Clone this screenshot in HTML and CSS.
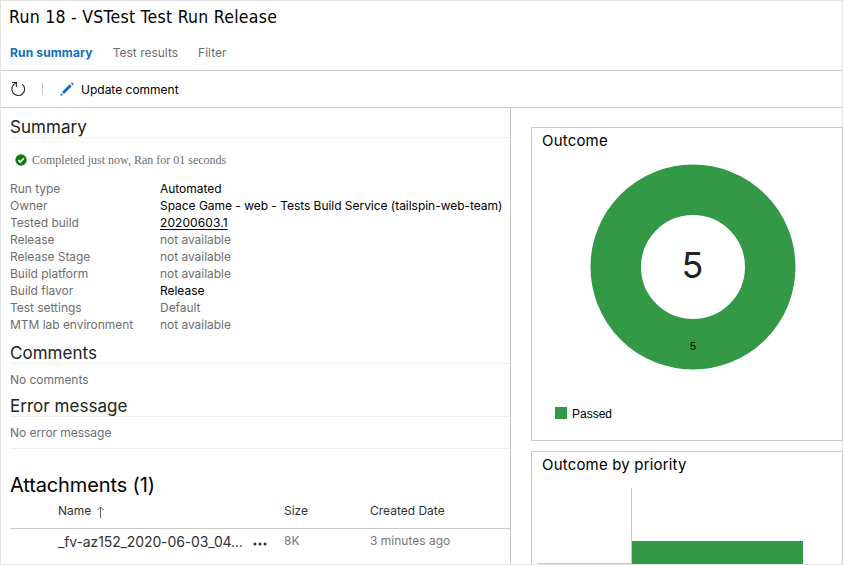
FILE: index.html
```html
<!DOCTYPE html>
<html lang="en">
<head>
<meta charset="utf-8">
<title>Run 18 - VSTest Test Run Release</title>
<link rel="stylesheet" href="styles.css">
</head>
<body>
<div class="app">
  <header class="header">
    <h1 class="title"><span>Run 18 - VSTest Test Run Release</span></h1>
    <nav class="tabs">
      <a class="tab active">Run summary</a>
      <a class="tab results">Test results</a>
      <a class="tab">Filter</a>
    </nav>
  </header>
  <div class="toolbar">
    <svg class="refresh" width="16" height="16" viewBox="0 0 16 16" fill="none" stroke="#222" stroke-width="1.1"><path d="M5.6 2.3A6.4 6.4 0 1 0 12.2 3.1M2 1.5H6.4V5.8"/></svg>
    <span class="divider"></span>
    <svg class="pencil" width="14" height="14" viewBox="0 0 14 14" fill="#106ebe"><path d="M.3 13.7 1 11 3 13ZM2 10 9.7 2.3 11.7 4.3 4 12ZM10.7 1.3 11.3.7Q11.9.1 12.5.7L13.3 1.5Q13.9 2.1 13.3 2.7L12.7 3.3Z"/></svg>
    <span class="update">Update comment</span>
  </div>
  <main class="content">
    <section class="details">
      <h2 class="heading first"><span class="h-summary">Summary</span></h2>
      <div class="status">
        <svg width="12" height="12" viewBox="0 0 12 12"><circle cx="6" cy="6" r="5.7" fill="#107c10"/><path d="M3.2 6.2 5.2 8.1 8.9 4.2" fill="none" stroke="#fff" stroke-width="1.6"/></svg>
        <span>Completed just now, Ran for 01 seconds</span>
      </div>
      <dl class="fields">
        <dt>Run type</dt><dd class="strong">Automated</dd>
        <dt>Owner</dt><dd class="strong owner">Space Game - web - Tests Build Service (tailspin-web-team)</dd>
        <dt>Tested build</dt><dd class="strong"><a class="link">20200603.1</a></dd>
        <dt>Release</dt><dd>not available</dd>
        <dt>Release Stage</dt><dd>not available</dd>
        <dt>Build platform</dt><dd>not available</dd>
        <dt>Build flavor</dt><dd class="strong">Release</dd>
        <dt>Test settings</dt><dd>Default</dd>
        <dt>MTM lab environment</dt><dd>not available</dd>
      </dl>
      <h2 class="heading comments"><span>Comments</span></h2>
      <p class="note">No comments</p>
      <h2 class="heading error"><span>Error message</span></h2>
      <p class="note last">No error message</p>
      <h2 class="attachments"><span>Attachments (1)</span></h2>
      <div class="grid-head">
        <span class="name">Name <svg class="arrow" width="7" height="12" viewBox="0 0 7 12" fill="none" stroke="#555" stroke-width=".9"><path d="M3.5 12V1M.5 4 3.5 1 6.5 4"/></svg></span><span>Size</span><span>Created Date</span>
      </div>
      <div class="grid-row">
        <span class="file"><span class="filename">_fv-az152_2020-06-03_04...</span><svg class="more" width="14" height="4" viewBox="0 0 14 4" fill="#333"><circle cx="2" cy="2" r="1.5"/><circle cx="7" cy="2" r="1.5"/><circle cx="12" cy="2" r="1.5"/></svg></span><span>8K</span><span>3 minutes ago</span>
      </div>
    </section>
    <aside class="charts">
      <section class="card outcome">
        <h3>Outcome</h3>
        <svg class="donut" width="206" height="206" viewBox="0 0 206 206">
          <circle cx="103" cy="103" r="77.25" fill="none" stroke="#339947" stroke-width="50.5"/>
          <text class="total" x="102.5" y="114" text-anchor="middle">5</text>
          <text class="slice" x="103" y="186" text-anchor="middle">5</text>
        </svg>
        <div class="legend"><i></i><span>Passed</span></div>
      </section>
      <section class="card priority">
        <h3>Outcome by priority</h3>
        <div class="plot"><div class="axis"></div><div class="bars"><div class="bar"></div></div></div>
      </section>
    </aside>
  </main>
</div>
</body>
</html>
```

FILE: styles.css
```css
* { box-sizing: border-box; }
body {
  margin: 0;
  overflow: hidden;
  background: #fff;
  color: #000;
  font: 12px/17px Inter, "Liberation Sans", sans-serif;
}
h1, h2, h3, p, dl, dd { margin: 0; font-weight: 400; }
.app {
  width: 843px;
  height: 565px;
  border: 1px solid #e1e1e1;
  display: flex;
  flex-direction: column;
}
.header { height: 70px; flex: none; border-bottom: 1px solid #c8c8c8; padding-left: 9px; }
.title {
  font: 17.5px/32px "DejaVu Sans Condensed", "DejaVu Sans", sans-serif;
  font-stretch: condensed;
  letter-spacing: .27px;
  margin-left: -1px;
  height: 32px;
  white-space: nowrap;
}
.tabs { display: flex; gap: 20px; padding-top: 11px; color: #6e6e6e; }
.active { color: #106ebe; font-weight: 700; letter-spacing: .15px; }
.toolbar {
  height: 37px;
  flex: none;
  border-bottom: 1px solid #c8c8c8;
  display: flex;
  align-items: center;
  padding-left: 9px;
}
.divider { width: 1px; height: 12px; background: #c8c8c8; margin: 0 17px 0 16px; }
.update { margin-left: 7px; }
.content { display: flex; flex: 1; min-height: 0; }
.details { width: 510px; flex: none; border-right: 1px solid #c8c8c8; padding-left: 9px; white-space: nowrap; overflow: hidden; }
.heading {
  font-size: 17px;
  line-height: 22px;
  letter-spacing: .04px;
  color: #222;
  border-bottom: 1px solid #efefef;
}
.first { height: 30px; padding-top: 8px; }
.status {
  height: 42px;
  display: flex;
  align-items: center;
  gap: 5px;
  padding: 1px 0 0 5px;
  color: #6e6e6e;
  font: 12px/16px "Liberation Serif", serif;
}
.fields { display: grid; grid-template-columns: 150px 1fr; grid-auto-rows: 17px; color: #6e6e6e; letter-spacing: -.035px; }
.strong { color: #000; }
.link { text-decoration: underline; text-underline-offset: 2px; letter-spacing: .08px; }
.comments { height: 31px; padding-top: 9px; }
.note { height: 31px; padding-top: 7px; color: #6e6e6e; letter-spacing: -.04px; }
.error { height: 22px; }
.last { height: 32px; border-bottom: 1px solid #efefef; }
.attachments { font-size: 20px; line-height: 26px; letter-spacing: -.13px; margin-top: 23px; }
.grid-head, .grid-row { display: grid; grid-template-columns: 226px 86px 1fr; padding-left: 48px; }
.grid-head { height: 31px; padding-top: 4px; border-bottom: 1px solid #c8c8c8; color: #333; }
.arrow { vertical-align: -3px; margin-left: 2px; }
.grid-row { padding-top: 3px; color: #777; }
.file { display: flex; align-items: center; gap: 10px; font-size: 14px; line-height: 20px; letter-spacing: -.12px; color: #333; }
.more { margin-top: 3px; }
.charts { flex: 1; margin-right: -1px; padding: 19px 0 0 20px; min-width: 0; overflow: hidden; }
.card { width: 312px; border: 1px solid #c8c8c8; }
.card h3 { font-size: 15px; line-height: 20px; letter-spacing: .18px; margin: 3px 0 0 10px; }
.outcome { height: 314px; }
.donut { display: block; margin: 13px 0 0 58px; }
.total { font: 36px Inter, sans-serif; fill: #222; }
.slice { font: 11px "Liberation Sans", sans-serif; }
.legend { display: flex; align-items: center; gap: 5px; margin: 34px 0 0 23px; font-family: "Liberation Sans", sans-serif; }
.legend i { width: 12px; height: 12px; background: #339947; }
.legend span { padding-top: 2px; margin-bottom: -1px; }
.priority { height: 160px; margin-top: 10px; }
.plot { display: flex; height: 100px; margin-top: 13px; padding-left: 6px; }
.axis { width: 94px; height: 76px; border-right: 1px solid #c8c8c8; border-bottom: 1px solid #c8c8c8; }
.bars { padding-top: 53px; }
.bar { width: 171px; height: 40px; background: #339947; }
```
